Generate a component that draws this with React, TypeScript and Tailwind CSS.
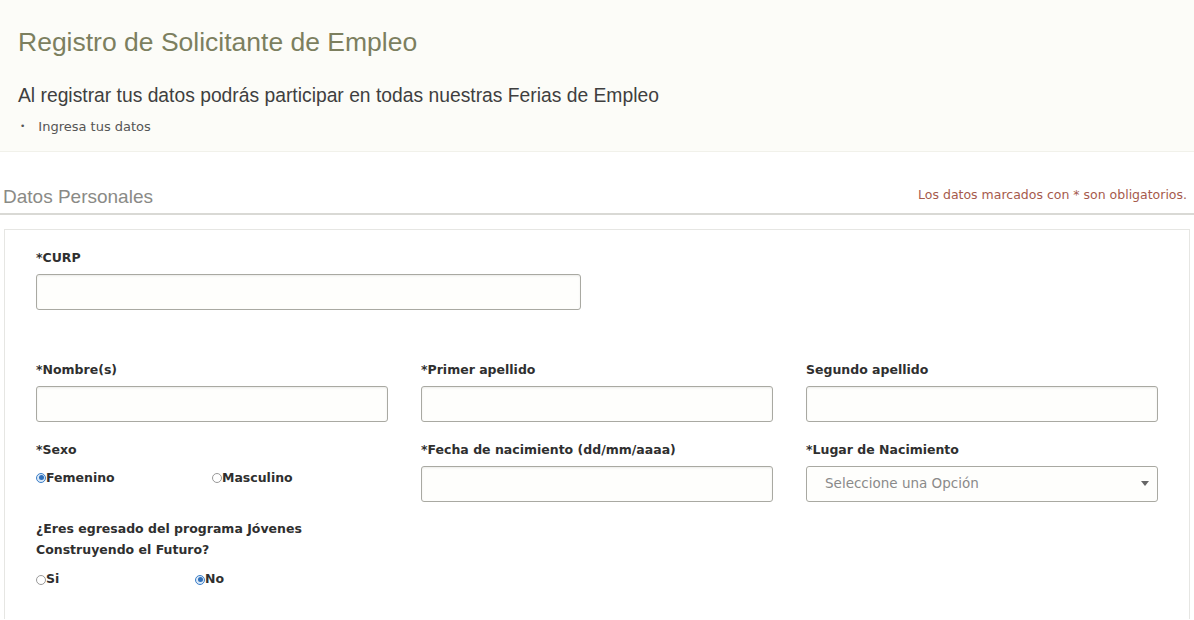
import { ReactNode } from "react";

function Label({ children }: { children: ReactNode }) {
  return (
    <label className="mb-[8px] block font-['DejaVu_Sans',Verdana,sans-serif] text-[12.5px] font-bold leading-4 text-[#2f2f2f]">
      {children}
    </label>
  );
}

function TextInput() {
  return <div className="h-[36px] w-full rounded-[3px] border border-[#a9a9a2] bg-[#fefefc] shadow-[inset_0_1px_2px_rgba(0,0,0,0.08)]" />;
}

function Radio({ checked, label }: { checked?: boolean; label: string }) {
  return (
    <span className="flex items-center font-['DejaVu_Sans',Verdana,sans-serif] text-[12.5px] font-bold text-[#2f2f2f]">
      {checked ? (
        <span className="flex h-[10px] w-[10px] items-center justify-center rounded-full border border-[#3b7ec8] bg-[#dbe9f7]">
          <span className="h-[5px] w-[5px] rounded-full bg-[#2f6fba]" />
        </span>
      ) : (
        <span className="h-[10px] w-[10px] rounded-full border border-[#999] bg-white" />
      )}
      {label}
    </span>
  );
}

export default function App() {
  return (
    <div className="min-h-[620px] w-[1194px] bg-white font-['Liberation_Sans',Arial,sans-serif]">
      <div className="border-b border-[#f1f1ea] bg-[#fcfcf8] px-[18px] pt-[26px] pb-[14px]">
        <h1 className="text-[26.5px] leading-8 text-[#7c7f5f]">Registro de Solicitante de Empleo</h1>
        <p className="mt-[26px] text-[19.3px] leading-6 text-[#3f3f3f]">
          Al registrar tus datos podrás participar en todas nuestras Ferias de Empleo
        </p>
        <ul className="mt-[9px] ml-[2px]">
          <li className="flex items-center gap-[13px] font-['DejaVu_Sans',Verdana,sans-serif] text-[13px] text-[#555]">
            <span className="text-[9px]">•</span>Ingresa tus datos
          </li>
        </ul>
      </div>

      <div className="mt-[33px] flex items-end justify-between border-b-2 border-[#d9d9d5] px-[3px] pb-[4px] pr-[7px]">
        <span className="text-[19px] leading-6 text-[#8a8a86]">Datos Personales</span>
        <span className="pb-[4px] font-['DejaVu_Sans',Verdana,sans-serif] text-[12.5px] text-[#a65a4c]">
          Los datos marcados con * son obligatorios.
        </span>
      </div>

      <div className="mx-[4px] mt-[14px] border border-b-0 border-[#e6e6e3] px-[31px] pt-[20px] pb-[30px]">
        <div className="grid grid-cols-2 gap-x-[33px]">
          <div>
            <Label>*CURP</Label>
            <TextInput />
          </div>
        </div>

        <div className="mt-[52px] grid grid-cols-3 gap-x-[33px] gap-y-[20px]">
          <div>
            <Label>*Nombre(s)</Label>
            <TextInput />
          </div>
          <div>
            <Label>*Primer apellido</Label>
            <TextInput />
          </div>
          <div>
            <Label>Segundo apellido</Label>
            <TextInput />
          </div>

          <div>
            <Label>*Sexo</Label>
            <div className="grid grid-cols-2 pt-[3px]">
              <Radio checked label="Femenino" />
              <Radio label="Masculino" />
            </div>
            <div className="mt-[31px] w-[310px]">
              <p className="font-['DejaVu_Sans',Verdana,sans-serif] text-[12.5px] font-bold leading-[21px] text-[#2f2f2f]">
                ¿Eres egresado del programa Jóvenes Construyendo el Futuro?
              </p>
              <div className="mt-[10px] grid w-[318px] grid-cols-2">
                <Radio label="Si" />
                <Radio checked label="No" />
              </div>
            </div>
          </div>
          <div>
            <Label>*Fecha de nacimiento (dd/mm/aaaa)</Label>
            <TextInput />
          </div>
          <div>
            <Label>*Lugar de Nacimiento</Label>
            <div className="flex h-[36px] w-full items-center justify-between rounded-[3px] border border-[#a9a9a2] bg-[#fefefc] pl-[18px] pr-[8px]">
              <span className="font-['DejaVu_Sans',Verdana,sans-serif] text-[13.5px] text-[#8a8a8a]">Seleccione una Opción</span>
              <svg width="8" height="5" viewBox="0 0 8 5">
                <path d="M0 0h8L4 5z" fill="#666" />
              </svg>
            </div>
          </div>
        </div>
      </div>
    </div>
  );
}
